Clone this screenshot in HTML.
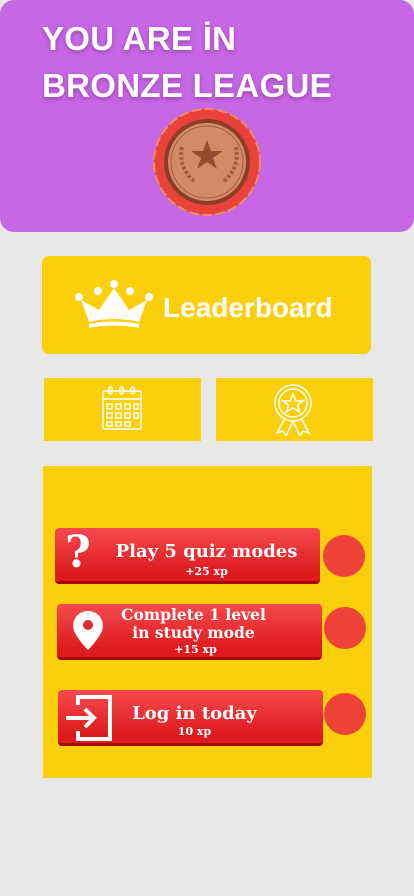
<!DOCTYPE html>
<html><head><meta charset="utf-8"><style>
*{margin:0;padding:0;box-sizing:border-box}
body{width:414px;height:896px;background:#e8e8e8;position:relative;overflow:hidden;font-family:"Liberation Sans",sans-serif}
.hdr{position:absolute;left:0;top:0;width:414px;height:232px;background:#c667e4;border-radius:14px}
.t{position:absolute;left:42px;color:#fff;font-weight:bold;font-size:33px;letter-spacing:0.3px;text-shadow:0 2px 4px rgba(80,0,100,.35)}
.y{background:#fbcf0a;position:absolute}
.btn{position:absolute;height:53px;border-radius:4px;background:linear-gradient(#f64a4e,#dd1b1e 85%);box-shadow:0 3px 0 #a80808;color:#fff;font-family:"DejaVu Serif",serif;font-weight:bold;text-align:center}
.c{position:absolute;width:42px;height:42px;border-radius:50%;background:#ef4238}
</style></head><body>
<div class="hdr"></div>
<div class="t" style="top:20px">YOU ARE İN</div>
<div class="t" style="top:67px">BRONZE LEAGUE</div>
<svg style="position:absolute;left:152px;top:107px" width="110" height="110" viewBox="0 0 110 110">
<circle cx="55" cy="55" r="53" fill="#e8423a" stroke="#f08a60" stroke-width="2" stroke-dasharray="10 3"/>
<circle cx="55" cy="55" r="43" fill="#8a3e25"/>
<circle cx="55" cy="55" r="39" fill="#d48a68"/>
<circle cx="55" cy="55" r="36" fill="none" stroke="#a85a3c" stroke-width="1"/>
<polygon points="55,33 59,44 71,44 61,51 65,62 55,55 45,62 49,51 39,44 51,44" fill="#9a4a30"/>
<path d="M30 40 Q26 60 42 74 M72 74 Q88 60 84 40" stroke="#a85a3c" stroke-width="4" fill="none" stroke-dasharray="3 2"/>
</svg>
<div class="y" style="left:42px;top:256px;width:329px;height:98px;border-radius:7px"></div>
<svg style="position:absolute;left:75px;top:280px" width="80" height="50" viewBox="0 0 80 50">
<g fill="#fff"><circle cx="4" cy="17" r="4"/><circle cx="23" cy="11" r="4"/><circle cx="39" cy="4" r="4"/><circle cx="55" cy="11" r="4"/><circle cx="74" cy="17" r="4"/>
<path d="M6 20 L24 30 L39 8 L54 30 L72 20 L64 42 Q39 36 14 42 Z"/><path d="M14 44 Q39 39 64 44 L64 48 Q39 43 14 48 Z"/></g></svg>
<div style="position:absolute;left:163px;top:292px;color:#fff;font-weight:bold;font-size:28px">Leaderboard</div>
<div class="y" style="left:44px;top:378px;width:157px;height:63px"></div>
<div class="y" style="left:216px;top:378px;width:157px;height:63px"></div>
<svg style="position:absolute;left:101px;top:386px" width="42" height="46" viewBox="0 0 42 46" fill="none" stroke="#fff" stroke-width="1.5">
<rect x="2" y="5" width="38" height="38" rx="2"/><line x1="2" y1="13" x2="40" y2="13"/>
<rect x="8" y="1" width="3" height="7" rx="1.5"/><rect x="19" y="1" width="3" height="7" rx="1.5"/><rect x="30" y="1" width="3" height="7" rx="1.5"/>
<g><rect x="6" y="18" width="5" height="5"/><rect x="15" y="18" width="5" height="5"/><rect x="24" y="18" width="5" height="5"/><rect x="33" y="18" width="4" height="5"/>
<rect x="6" y="27" width="5" height="5"/><rect x="15" y="27" width="5" height="5"/><rect x="24" y="27" width="5" height="5"/><rect x="33" y="27" width="4" height="5"/>
<rect x="6" y="36" width="5" height="4"/><rect x="15" y="36" width="5" height="4"/><rect x="24" y="36" width="5" height="4"/></g></svg>
<svg style="position:absolute;left:274px;top:384px" width="40" height="52" viewBox="0 0 40 52" fill="none" stroke="#fff" stroke-width="1.5">
<circle cx="19" cy="19" r="18"/><circle cx="19" cy="19" r="14"/>
<polygon points="19,10 22,17 29,17 23.5,21 25.5,28 19,24 12.5,28 14.5,21 9,17 16,17"/>
<path d="M11 34 L3 49 L9 47 L12 52 L19 37 L26 52 L29 47 L35 49 L27 34"/></svg>
<div class="y" style="left:43px;top:466px;width:329px;height:312px"></div>
<div class="btn" style="left:55px;top:528px;width:265px"><div style="position:absolute;left:0;right:0;top:13px;font-size:18px;padding-left:38px">Play 5 quiz modes</div><div style="position:absolute;left:0;right:0;top:37px;padding-left:38px;font-size:11px">+25 xp</div>
<div style="position:absolute;left:10px;top:-2px;font-size:44px;line-height:54px;font-family:'DejaVu Serif',serif">?</div></div>
<div class="btn" style="left:57px;top:604px;width:265px"><div style="position:absolute;left:0;right:0;top:2px;font-size:15.5px;line-height:18px;padding-left:8px">Complete 1 level<br>in study mode</div><div style="position:absolute;left:0;right:0;top:39px;font-size:11px;padding-left:12px">+15 xp</div>
<svg style="position:absolute;left:16px;top:7px" width="30" height="40" viewBox="0 0 30 40"><path d="M15 0 C6 0 0 7 0 15 C0 24 15 39 15 39 C15 39 30 24 30 15 C30 7 24 0 15 0 Z" fill="#fff"/><circle cx="15" cy="14" r="5" fill="#e52a2d"/></svg></div>
<div class="btn" style="left:58px;top:690px;width:265px"><div style="position:absolute;left:0;right:0;top:13px;font-size:18px;padding-left:8px">Log in today</div><div style="position:absolute;left:0;right:0;top:35px;font-size:11px;padding-left:8px">10 xp</div>
<svg style="position:absolute;left:8px;top:5px" width="46" height="46" viewBox="0 0 46 46" fill="none" stroke="#fff" stroke-width="4"><path d="M12 10 V2 H44 V44 H12 V36"/><path d="M0 23 H28 M19 14 L28 23 L19 32"/></svg></div>
<div class="c" style="left:323px;top:535px"></div>
<div class="c" style="left:324px;top:607px"></div>
<div class="c" style="left:324px;top:693px"></div>
</body></html>
